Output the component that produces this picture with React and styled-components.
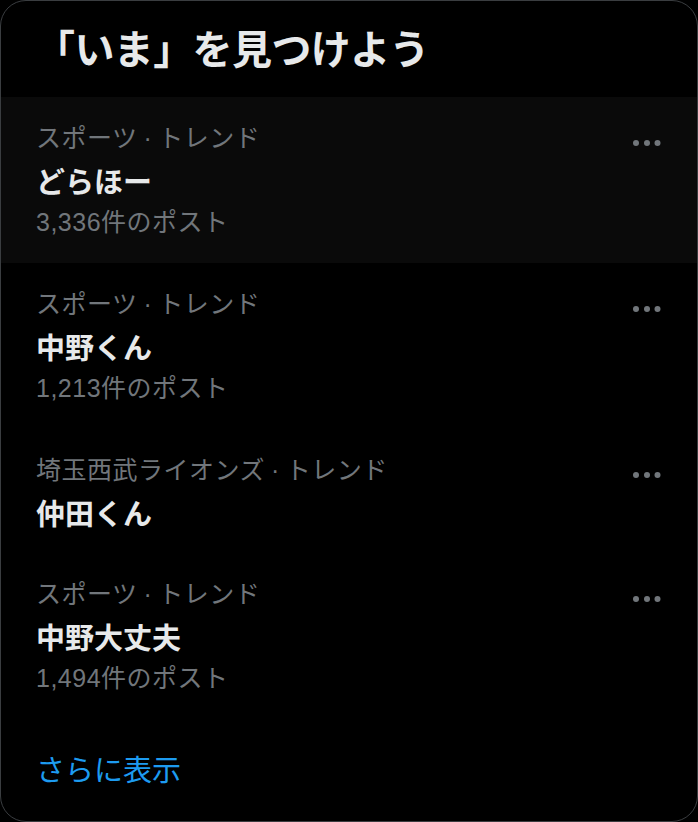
import React from "react";
import styled, { createGlobalStyle } from "styled-components";

const GlobalStyle = createGlobalStyle`
  html, body {
    margin: 0;
    padding: 0;
    background: #000;
  }
  body {
    font-family: "Liberation Sans", "Noto Sans CJK JP", sans-serif;
    -webkit-font-smoothing: antialiased;
  }
  * { box-sizing: border-box; }
`;

const Card = styled.section`
  width: 698px;
  height: 822px;
  background: #000;
  border: 1px solid #3a3d40;
  border-radius: 26px;
  overflow: hidden;
  display: flex;
  flex-direction: column;
`;

const Header = styled.h2`
  margin: 0;
  height: 96px;
  display: flex;
  align-items: center;
  padding: 0 34px 4px;
  font-family: "Noto Sans CJK JP", sans-serif;
  font-size: 40px;
  font-weight: 700;
  color: #e7e9ea;
  letter-spacing: -0.6px;
`;

const Item = styled.div`
  display: flex;
  align-items: flex-start;
  padding: 20px 30px 20px 35px;
  background: ${(p) => (p.$hover ? "#0a0a0a" : "transparent")};
`;

const Content = styled.div`
  flex: 1;
  display: flex;
  flex-direction: column;
`;

const Meta = styled.div`
  font-size: 25px;
  letter-spacing: 0.5px;
  line-height: 42px;
  color: #71767b;
  white-space: nowrap;
`;

const Sep = styled.span`
  margin: 0 6px;
`;

const Title = styled.div`
  font-family: "Noto Sans CJK JP", sans-serif;
  font-size: 29px;
  font-weight: 700;
  line-height: 42px;
  color: #e7e9ea;
`;

const MoreButton = styled.button`
  width: 40px;
  height: 40px;
  margin-top: 6px;
  padding: 0;
  border: none;
  background: transparent;
  display: flex;
  align-items: center;
  justify-content: center;
`;

const ShowMore = styled.a`
  height: 98px;
  display: flex;
  align-items: center;
  padding: 0 35px;
  font-family: "Noto Sans CJK JP", sans-serif;
  font-size: 29px;
  color: #1d9bf0;
  text-decoration: none;
`;

const Dots = () => (
  <svg width="40" height="40" viewBox="0 0 40 40">
    <circle cx="9" cy="20" r="3" fill="#71767b" />
    <circle cx="20" cy="20" r="3" fill="#71767b" />
    <circle cx="30.5" cy="20" r="3" fill="#71767b" />
  </svg>
);

const trends = [
  { cat: "スポーツ", name: "どらほー", count: "3,336件のポスト", hover: true },
  { cat: "スポーツ", name: "中野くん", count: "1,213件のポスト" },
  { cat: "埼玉西武ライオンズ", name: "仲田くん" },
  { cat: "スポーツ", name: "中野大丈夫", count: "1,494件のポスト" },
];

export default function App() {
  return (
    <>
      <GlobalStyle />
      <Card>
        <Header>「いま」を見つけよう</Header>
        {trends.map((t, i) => (
          <Item key={i} $hover={t.hover}>
            <Content>
              <Meta>
                {t.cat}
                <Sep>·</Sep>
                トレンド
              </Meta>
              <Title>{t.name}</Title>
              {t.count && <Meta>{t.count}</Meta>}
            </Content>
            <MoreButton aria-label="その他">
              <Dots />
            </MoreButton>
          </Item>
        ))}
        <ShowMore href="#">さらに表示</ShowMore>
      </Card>
    </>
  );
}
